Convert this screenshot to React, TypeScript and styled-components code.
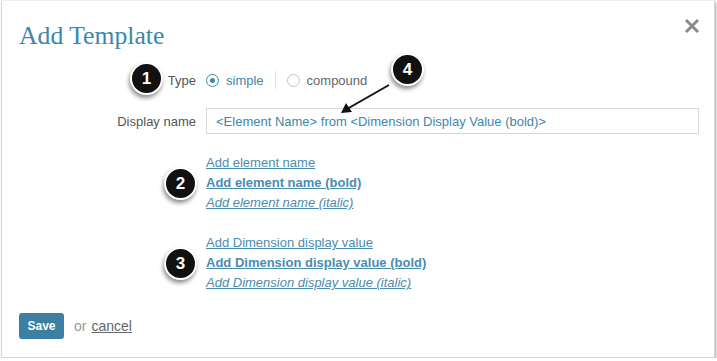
import React from 'react'
import styled, { createGlobalStyle } from 'styled-components'

const GlobalStyle = createGlobalStyle`
    body {
        margin: 0;
        background: #ffffff;
        font-family: "Liberation Sans", Arial, sans-serif;
    }
`

const Dialog = styled.div`
    position: relative;
    box-sizing: border-box;
    width: 714px;
    height: 358px;
    margin-left: 1px;
    background: #fff;
    border: 1px solid #d6d6d6;
    border-top-color: #eeeeee;
    box-shadow: 1px 2px 2px rgba(0, 0, 0, 0.35);
    display: flex;
    flex-direction: column;
`

const Header = styled.div`
    display: flex;
    justify-content: space-between;
    align-items: flex-start;
    padding: 20px 14px 0 17px;
`

const Title = styled.h2`
    margin: 0;
    font-family: "Liberation Serif", "Times New Roman", serif;
    font-weight: normal;
    font-size: 25.7px;
    line-height: 30px;
    color: #3d87a8;
`

const Close = styled.button`
    border: none;
    background: none;
    padding: 0;
    margin-top: -3px;
    width: 16px;
    height: 16px;
    cursor: pointer;
`

const Form = styled.div`
    display: flex;
    flex-direction: column;
    padding: 0 18px;
    margin-top: 17px;
`

const Row = styled.div<{ $height: number; $gap?: number }>`
    display: grid;
    grid-template-columns: 176px 1fr;
    column-gap: 10px;
    align-items: center;
    height: ${p => p.$height}px;
    margin-top: ${p => p.$gap || 0}px;
`

const Label = styled.label`
    text-align: right;
    font-size: 13px;
    color: #555;
`

const Radios = styled.div`
    display: flex;
    align-items: center;
    font-size: 13px;
`

const RadioOption = styled.span<{ $checked?: boolean }>`
    display: flex;
    align-items: center;
    gap: 7px;
    color: ${p => p.$checked ? '#3d87a8' : '#666'};
`

const RadioDot = styled.span<{ $checked?: boolean }>`
    box-sizing: border-box;
    width: 13px;
    height: 13px;
    border-radius: 50%;
    border: 1.5px solid ${p => p.$checked ? '#3d87a8' : '#c4c4c4'};
    display: flex;
    align-items: center;
    justify-content: center;

    &::after {
        content: "";
        width: 5px;
        height: 5px;
        border-radius: 50%;
        background: ${p => p.$checked ? '#3d87a8' : 'transparent'};
    }
`

const Separator = styled.span`
    width: 1px;
    height: 18px;
    background: #e4e4e4;
    margin: 0 11px;
`

const Input = styled.div`
    box-sizing: border-box;
    height: 26px;
    width: 493px;
    border: 1px solid #d8d8d8;
    padding: 0 9px;
    display: flex;
    align-items: center;
    font-size: 13px;
    color: #3d87a8;
`

const Links = styled.div<{ $gap: number }>`
    display: flex;
    flex-direction: column;
    align-items: flex-start;
    margin: ${p => p.$gap}px 0 0 204px;
`

const LinkItem = styled.a<{ $variant?: 'bold' | 'italic' }>`
    font-size: 13px;
    line-height: 20px;
    color: #4a8db0;
    text-decoration: underline;
    font-weight: ${p => p.$variant === 'bold' ? 'bold' : 'normal'};
    font-style: ${p => p.$variant === 'italic' ? 'italic' : 'normal'};
    cursor: pointer;
`

const Footer = styled.div`
    display: flex;
    align-items: center;
    gap: 10px;
    padding: 0 17px;
    margin-top: 20px;
    font-size: 14px;
    color: #999;
`

const SaveButton = styled.button`
    height: 26px;
    width: 45px;
    border: none;
    border-radius: 3px;
    background: #3a80a2;
    color: #fff;
    font-family: "Liberation Sans", Arial, sans-serif;
    font-weight: bold;
    font-size: 12px;
    cursor: pointer;
`

const Cancel = styled.a`
    color: #666;
    text-decoration: underline;
    margin-left: -5px;
    cursor: pointer;
`

const Badge = styled.div<{ $x: number; $y: number }>`
    position: absolute;
    left: ${p => p.$x}px;
    top: ${p => p.$y}px;
    box-sizing: border-box;
    width: 33px;
    height: 33px;
    border-radius: 50%;
    background: #111;
    border: 2px solid #fff;
    box-shadow: -1px 3px 4px rgba(0, 0, 0, 0.45);
    color: #fff;
    font-weight: bold;
    font-size: 17px;
    display: flex;
    align-items: center;
    justify-content: center;
`

const Arrow = styled.svg`
    position: absolute;
    left: 335px;
    top: 80px;
`

export default function App() {
    return (
        <>
            <GlobalStyle />
            <Dialog>
                <Header>
                    <Title>Add Template</Title>
                    <Close aria-label="Close">
                        <svg width="16" height="16" viewBox="0 0 16 16">
                            <path d="M2 2 L14 14 M14 2 L2 14" stroke="#8a8a8a" strokeWidth="3" strokeLinecap="butt" />
                        </svg>
                    </Close>
                </Header>
                <Form>
                    <Row $height={24}>
                        <Label>Type</Label>
                        <Radios>
                            <RadioOption $checked>
                                <RadioDot $checked />simple
                            </RadioOption>
                            <Separator />
                            <RadioOption>
                                <RadioDot />compound
                            </RadioOption>
                        </Radios>
                    </Row>
                    <Row $height={26} $gap={16}>
                        <Label>Display name</Label>
                        <Input>&lt;Element Name&gt; from &lt;Dimension Display Value (bold)&gt;</Input>
                    </Row>
                </Form>
                <Links $gap={19}>
                    <LinkItem>Add element name</LinkItem>
                    <LinkItem $variant="bold">Add element name (bold)</LinkItem>
                    <LinkItem $variant="italic">Add element name (italic)</LinkItem>
                </Links>
                <Links $gap={20}>
                    <LinkItem>Add Dimension display value</LinkItem>
                    <LinkItem $variant="bold">Add Dimension display value (bold)</LinkItem>
                    <LinkItem $variant="italic">Add Dimension display value (italic)</LinkItem>
                </Links>
                <Footer>
                    <SaveButton>Save</SaveButton>
                    <span>or</span>
                    <Cancel>cancel</Cancel>
                </Footer>

                <Badge $x={128} $y={61}>1</Badge>
                <Badge $x={162} $y={166}>2</Badge>
                <Badge $x={162} $y={246}>3</Badge>
                <Badge $x={389} $y={52}>4</Badge>
                <Arrow width="60" height="36" viewBox="0 0 60 36">
                    <path d="M52 4 L10 28" stroke="#111" strokeWidth="2" />
                    <path d="M4 32 L9 22 L15 31 Z" fill="#111" />
                </Arrow>
            </Dialog>
        </>
    )
}
